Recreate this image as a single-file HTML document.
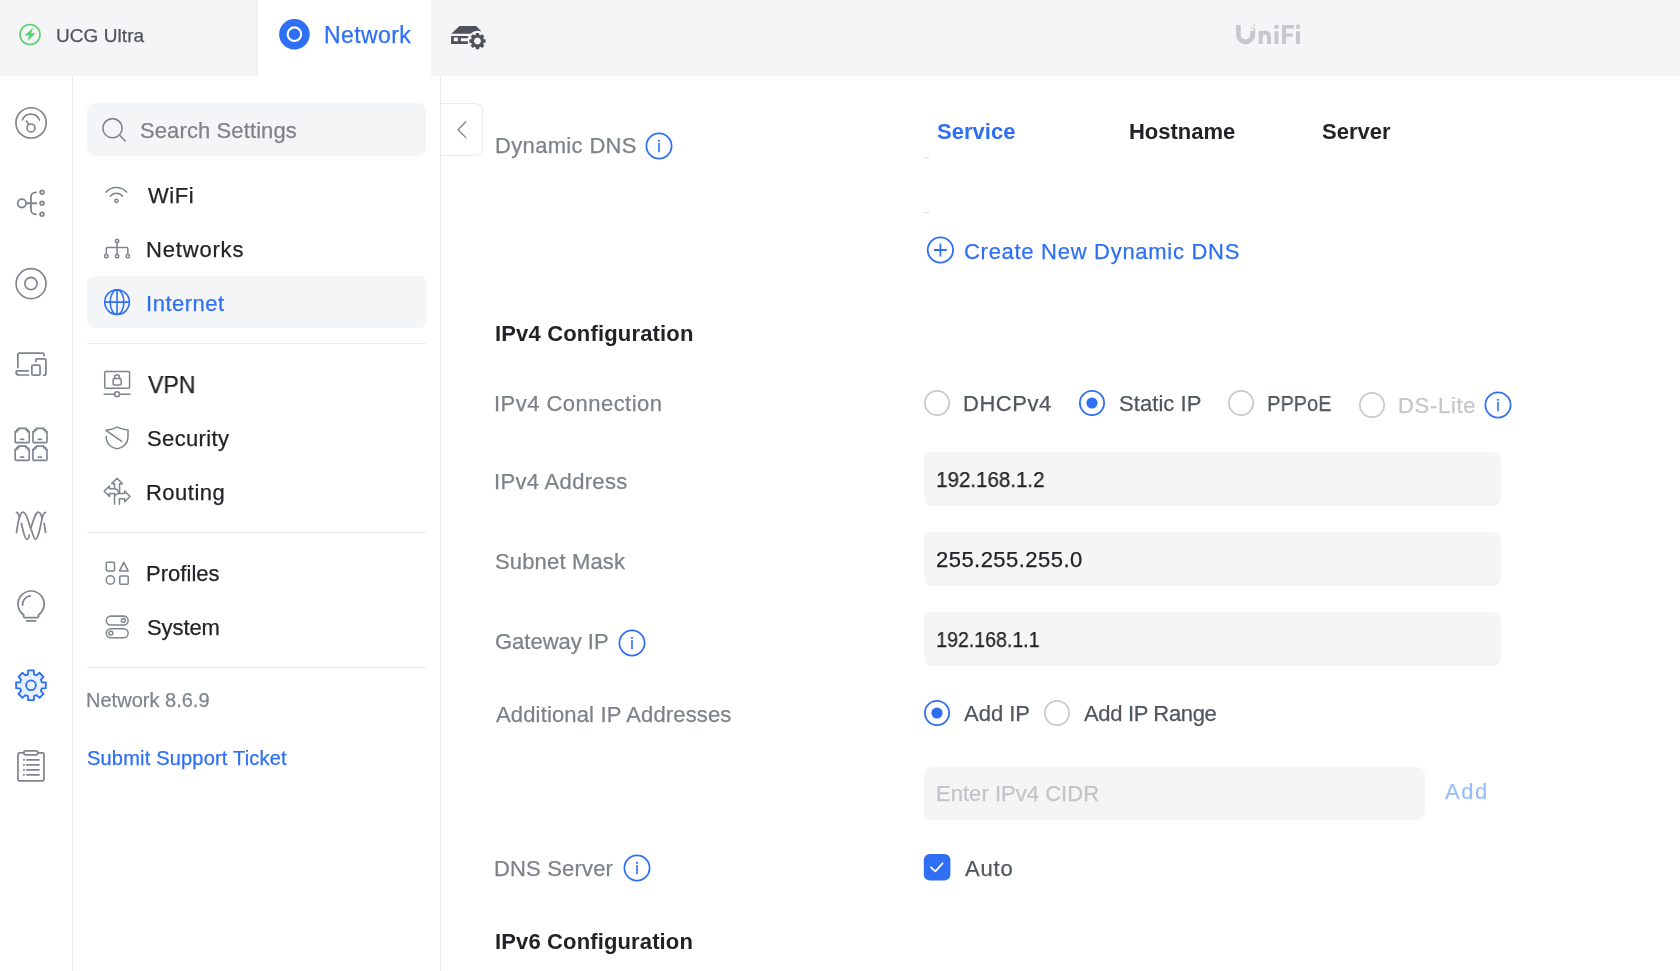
<!DOCTYPE html>
<html><head><meta charset="utf-8"><title>UniFi Network - Internet</title>
<style>
html,body{margin:0;padding:0;}
body{width:1680px;height:971px;overflow:hidden;position:relative;background:#fff;font-family:"Liberation Sans",sans-serif;}
.t{position:absolute;white-space:nowrap;line-height:1;will-change:transform;}
svg{overflow:visible}
</style></head><body>
<div style="position:absolute;left:0;top:0;width:1680px;height:76px;background:#f4f5f6"></div>
<div style="position:absolute;left:256px;top:0;width:2px;height:76px;background:#eef0f2"></div>
<div style="position:absolute;left:258px;top:0;width:173px;height:76px;background:#fff"></div>
<svg style="position:absolute;left:18px;top:23px" width="24" height="24" viewBox="0 0 24 24">
<circle cx="12" cy="11.5" r="10" fill="none" stroke="#5fcf6f" stroke-width="1.6"/>
<path d="M14.4 5.6 L7.2 12.2 H11.4 L10.2 17.3 L17 10.6 H12.8 Z" fill="#5fcf6f" stroke="#5fcf6f" stroke-width="0.6" stroke-linejoin="round"/></svg>
<div class="t" style="left:56.03px;top:26.32px;font-size:19px;color:#50565e;-webkit-text-stroke:0.25px currentColor;letter-spacing:0.070px;">UCG Ultra</div>
<svg style="position:absolute;left:278px;top:18px" width="32" height="32" viewBox="0 0 32 32">
<circle cx="16.4" cy="16.2" r="15.3" fill="#2e6ff4"/><circle cx="16.4" cy="16.2" r="6.8" fill="none" stroke="#fff" stroke-width="2.1"/></svg>
<div class="t" style="left:323.51px;top:23.93px;font-size:23px;color:#2e6ff4;-webkit-text-stroke:0.25px currentColor;letter-spacing:0.416px;">Network</div>
<div style="position:absolute;left:72px;top:76px;width:1px;height:895px;background:#e9eaec"></div>
<div style="position:absolute;left:440px;top:76px;width:1px;height:895px;background:#e9eaec"></div>
<div style="position:absolute;left:87px;top:103px;width:339px;height:53px;border-radius:8px;background:#f4f5f6"></div>
<svg style="position:absolute;left:98px;top:114px" width="32" height="32" viewBox="0 0 32 32">
<circle cx="14.5" cy="14.2" r="9.6" fill="none" stroke="#7e858e" stroke-width="1.6"/><path d="M21.3 21 L27.3 27" stroke="#7e858e" stroke-width="1.6" stroke-linecap="round"/></svg>
<div class="t" style="left:140.25px;top:119.98px;font-size:22px;color:#7e838a;-webkit-text-stroke:0.25px currentColor;letter-spacing:0.107px;">Search Settings</div>
<div style="position:absolute;left:87px;top:276px;width:340px;height:52px;border-radius:8px;background:#f4f5f6"></div>
<div class="t" style="left:148.10px;top:185.28px;font-size:22px;color:#212327;-webkit-text-stroke:0.25px currentColor;letter-spacing:0.532px;">WiFi</div>
<div class="t" style="left:146.40px;top:238.78px;font-size:22px;color:#212327;-webkit-text-stroke:0.25px currentColor;letter-spacing:0.816px;">Networks</div>
<div class="t" style="left:146.17px;top:292.78px;font-size:22px;color:#2e6ff4;-webkit-text-stroke:0.25px currentColor;letter-spacing:0.514px;">Internet</div>
<div class="t" style="left:148.09px;top:372.78px;font-size:24px;color:#212327;-webkit-text-stroke:0.25px currentColor;transform:scaleX(0.9620);transform-origin:0.11px 0;">VPN</div>
<div class="t" style="left:147.20px;top:427.68px;font-size:22px;color:#212327;-webkit-text-stroke:0.25px currentColor;letter-spacing:0.368px;">Security</div>
<div class="t" style="left:146.40px;top:482.18px;font-size:22px;color:#212327;-webkit-text-stroke:0.25px currentColor;letter-spacing:0.482px;">Routing</div>
<div class="t" style="left:146.40px;top:563.48px;font-size:22px;color:#212327;-webkit-text-stroke:0.25px currentColor;letter-spacing:0.034px;">Profiles</div>
<div class="t" style="left:147.20px;top:617.48px;font-size:22px;color:#212327;-webkit-text-stroke:0.25px currentColor;letter-spacing:-0.099px;">System</div>
<div style="position:absolute;left:87px;top:343px;width:339px;height:1px;background:#e9eaec"></div>
<div style="position:absolute;left:87px;top:532px;width:339px;height:1px;background:#e9eaec"></div>
<div style="position:absolute;left:87px;top:667px;width:339px;height:1px;background:#e9eaec"></div>
<div class="t" style="left:85.86px;top:689.57px;font-size:20px;color:#80868e;-webkit-text-stroke:0.25px currentColor;letter-spacing:0.015px;">Network 8.6.9</div>
<div class="t" style="left:86.59px;top:748.47px;font-size:20px;color:#2e6ff4;-webkit-text-stroke:0.25px currentColor;letter-spacing:0.198px;">Submit Support Ticket</div>
<div style="position:absolute;left:441px;top:103px;width:41px;height:51px;border:1px solid #e9eaec;border-left:none;border-radius:0 8px 8px 0;background:#fff"></div>
<svg style="position:absolute;left:452px;top:118px" width="20" height="24" viewBox="0 0 20 24">
<path d="M13.9 3.8 L6 11.7 L13.9 19.6" fill="none" stroke="#7e858e" stroke-width="1.3" stroke-linecap="round" stroke-linejoin="round"/></svg>
<div class="t" style="left:494.70px;top:134.98px;font-size:22px;color:#7d828a;-webkit-text-stroke:0.25px currentColor;letter-spacing:0.337px;">Dynamic DNS</div>
<svg style="position:absolute;left:644.4px;top:131.4px" width="30" height="30" viewBox="0 0 30 30">
<circle cx="15" cy="15" r="12.6" fill="none" stroke="#2e6ff4" stroke-width="1.75"/><circle cx="15" cy="9.8" r="1.1" fill="#2e6ff4"/><path d="M15 12 V21.2" stroke="#2e6ff4" stroke-width="1.6"/></svg>
<div class="t" style="left:937.17px;top:121.18px;font-size:22px;color:#2e6ff4;font-weight:700;letter-spacing:0.017px;">Service</div>
<div class="t" style="left:1129.13px;top:121.18px;font-size:22px;color:#212327;font-weight:700;letter-spacing:-0.019px;">Hostname</div>
<div class="t" style="left:1321.97px;top:121.18px;font-size:22px;color:#212327;font-weight:700;">Server</div>
<div style="position:absolute;left:924px;top:157px;width:6px;height:1px;background:#e3e4e6"></div>
<div style="position:absolute;left:924px;top:212px;width:6px;height:1px;background:#e3e4e6"></div>
<svg style="position:absolute;left:925px;top:235px" width="30" height="30" viewBox="0 0 30 30">
<circle cx="15.4" cy="15" r="12.7" fill="none" stroke="#2e6ff4" stroke-width="1.8"/><path d="M15.4 8.6 V21.4 M9 15 H21.8" stroke="#2e6ff4" stroke-width="1.8"/></svg>
<div class="t" style="left:963.68px;top:240.58px;font-size:22px;color:#2e6ff4;-webkit-text-stroke:0.25px currentColor;letter-spacing:0.711px;">Create New Dynamic DNS</div>
<div class="t" style="left:494.53px;top:322.78px;font-size:22px;color:#212327;font-weight:700;letter-spacing:0.164px;">IPv4 Configuration</div>
<div class="t" style="left:493.97px;top:392.68px;font-size:22px;color:#7d828a;-webkit-text-stroke:0.25px currentColor;letter-spacing:0.467px;">IPv4 Connection</div>
<svg style="position:absolute;left:924px;top:389.5px" width="26" height="26" viewBox="0 0 26 26"><circle cx="13" cy="13" r="12.15" fill="none" stroke="#c6c9cd" stroke-width="1.7"/></svg>
<div class="t" style="left:963.20px;top:393.13px;font-size:22px;color:#50565e;-webkit-text-stroke:0.25px currentColor;letter-spacing:0.514px;">DHCPv4</div>
<svg style="position:absolute;left:1078.5px;top:389.5px" width="26" height="26" viewBox="0 0 26 26"><circle cx="13" cy="13" r="12.1" fill="none" stroke="#2e6ff4" stroke-width="1.8"/><circle cx="13" cy="13" r="5.6" fill="#2e6ff4"/></svg>
<div class="t" style="left:1118.50px;top:393.13px;font-size:22px;color:#50565e;-webkit-text-stroke:0.25px currentColor;letter-spacing:0.069px;">Static IP</div>
<svg style="position:absolute;left:1227.5px;top:389.5px" width="26" height="26" viewBox="0 0 26 26"><circle cx="13" cy="13" r="12.15" fill="none" stroke="#c6c9cd" stroke-width="1.7"/></svg>
<div class="t" style="left:1266.70px;top:393.13px;font-size:22px;color:#50565e;-webkit-text-stroke:0.25px currentColor;transform:scaleX(0.9065);transform-origin:1.80px 0;">PPPoE</div>
<svg style="position:absolute;left:1359px;top:392.0px" width="26" height="26" viewBox="0 0 26 26"><circle cx="13" cy="13" r="12.15" fill="none" stroke="#c6c9cd" stroke-width="1.7"/></svg>
<div class="t" style="left:1397.70px;top:395.48px;font-size:22px;color:#c3c6ca;-webkit-text-stroke:0.25px currentColor;letter-spacing:0.704px;">DS-Lite</div>
<svg style="position:absolute;left:1483.3px;top:389.9px" width="30" height="30" viewBox="0 0 30 30">
<circle cx="15" cy="15" r="12.6" fill="none" stroke="#2e6ff4" stroke-width="1.75"/><circle cx="15" cy="9.8" r="1.1" fill="#2e6ff4"/><path d="M15 12 V21.2" stroke="#2e6ff4" stroke-width="1.6"/></svg>
<div class="t" style="left:493.97px;top:470.78px;font-size:22px;color:#7d828a;-webkit-text-stroke:0.25px currentColor;letter-spacing:0.329px;">IPv4 Address</div>
<div style="position:absolute;left:924px;top:452px;width:577px;height:54px;border-radius:8px;background:#f5f5f5"></div>
<div class="t" style="left:935.82px;top:469.08px;font-size:22px;color:#212327;-webkit-text-stroke:0.25px currentColor;transform:scaleX(0.9328);transform-origin:1.68px 0;">192.168.1.2</div>
<div style="position:absolute;left:924px;top:532px;width:577px;height:54px;border-radius:8px;background:#f5f5f5"></div>
<div class="t" style="left:936.39px;top:549.08px;font-size:22px;color:#212327;-webkit-text-stroke:0.25px currentColor;letter-spacing:0.458px;">255.255.255.0</div>
<div style="position:absolute;left:924px;top:612px;width:577px;height:54px;border-radius:8px;background:#f5f5f5"></div>
<div class="t" style="left:935.82px;top:629.08px;font-size:22px;color:#212327;-webkit-text-stroke:0.25px currentColor;transform:scaleX(0.8894);transform-origin:1.68px 0;">192.168.1.1</div>
<div class="t" style="left:494.70px;top:551.13px;font-size:22px;color:#7d828a;-webkit-text-stroke:0.25px currentColor;letter-spacing:0.158px;">Subnet Mask</div>
<div class="t" style="left:494.59px;top:631.48px;font-size:22px;color:#7d828a;-webkit-text-stroke:0.25px currentColor;letter-spacing:-0.015px;">Gateway IP</div>
<svg style="position:absolute;left:616.6px;top:627.6px" width="30" height="30" viewBox="0 0 30 30">
<circle cx="15" cy="15" r="12.6" fill="none" stroke="#2e6ff4" stroke-width="1.75"/><circle cx="15" cy="9.8" r="1.1" fill="#2e6ff4"/><path d="M15 12 V21.2" stroke="#2e6ff4" stroke-width="1.6"/></svg>
<div class="t" style="left:495.66px;top:703.58px;font-size:22px;color:#7d828a;-webkit-text-stroke:0.25px currentColor;letter-spacing:0.154px;">Additional IP Addresses</div>
<svg style="position:absolute;left:924px;top:700.0px" width="26" height="26" viewBox="0 0 26 26"><circle cx="13" cy="13" r="12.1" fill="none" stroke="#2e6ff4" stroke-width="1.8"/><circle cx="13" cy="13" r="5.6" fill="#2e6ff4"/></svg>
<div class="t" style="left:964.46px;top:703.28px;font-size:22px;color:#50565e;-webkit-text-stroke:0.25px currentColor;">Add IP</div>
<svg style="position:absolute;left:1043.6px;top:700.0px" width="26" height="26" viewBox="0 0 26 26"><circle cx="13" cy="13" r="12.15" fill="none" stroke="#c6c9cd" stroke-width="1.7"/></svg>
<div class="t" style="left:1084.46px;top:703.28px;font-size:22px;color:#50565e;-webkit-text-stroke:0.25px currentColor;letter-spacing:-0.342px;">Add IP Range</div>
<div style="position:absolute;left:924px;top:767px;width:501px;height:53px;border-radius:8px;background:#f5f5f5"></div>
<div class="t" style="left:936.40px;top:783.28px;font-size:22px;color:#c1c4c9;-webkit-text-stroke:0.25px currentColor;letter-spacing:0.031px;">Enter IPv4 CIDR</div>
<div class="t" style="left:1445.26px;top:780.58px;font-size:22px;color:#97bdf9;-webkit-text-stroke:0.25px currentColor;letter-spacing:1.560px;">Add</div>
<div class="t" style="left:494.20px;top:857.58px;font-size:22px;color:#7d828a;-webkit-text-stroke:0.25px currentColor;letter-spacing:0.168px;">DNS Server</div>
<svg style="position:absolute;left:621.7px;top:853.3px" width="30" height="30" viewBox="0 0 30 30">
<circle cx="15" cy="15" r="12.6" fill="none" stroke="#2e6ff4" stroke-width="1.75"/><circle cx="15" cy="9.8" r="1.1" fill="#2e6ff4"/><path d="M15 12 V21.2" stroke="#2e6ff4" stroke-width="1.6"/></svg>
<svg style="position:absolute;left:924px;top:854px" width="26" height="26" viewBox="0 0 26 26">
<rect x="-0.2" y="-0.1" width="26.6" height="26.6" rx="6" fill="#2e6ff4"/><path d="M7 13.3 L11.3 17.3 L18.6 9.3" fill="none" stroke="#fff" stroke-width="1.8" stroke-linecap="round" stroke-linejoin="round"/></svg>
<div class="t" style="left:964.96px;top:857.58px;font-size:22px;color:#50565e;-webkit-text-stroke:0.25px currentColor;letter-spacing:0.806px;">Auto</div>
<div class="t" style="left:494.53px;top:931.18px;font-size:22px;color:#212327;font-weight:700;letter-spacing:0.135px;">IPv6 Configuration</div>
<svg style="position:absolute;left:445px;top:18px" width="50" height="38" viewBox="0 0 1278 971" >
<path d="M160 405 L370 205 L795 205 L935 345 A 270 270 0 0 0 650 405 Z" fill="#4e535b"/>
<path d="M155 460 H605 L585 500 V515 H405 V595 H585 V665 H155 Z M225 500 V595 H330 V500 Z" fill="#4e535b" fill-rule="evenodd"/>
<path d="M785.2 428.1 L790.0 381.8 L870.0 381.8 L874.8 428.1 L912.8 443.8 L948.9 414.5 L1005.5 471.1 L976.2 507.2 L991.9 545.2 L1038.2 550.0 L1038.2 630.0 L991.9 634.8 L976.2 672.8 L1005.5 708.9 L948.9 765.5 L912.8 736.2 L874.8 751.9 L870.0 798.2 L790.0 798.2 L785.2 751.9 L747.2 736.2 L711.1 765.5 L654.5 708.9 L683.8 672.8 L668.1 634.8 L621.8 630.0 L621.8 550.0 L668.1 545.2 L683.8 507.2 L654.5 471.1 L711.1 414.5 L747.2 443.8 Z M830 500 A 88 88 0 1 0 830.1 500 Z" fill="#4e535b" fill-rule="evenodd"/>
</svg>
<svg style="position:absolute;left:1225px;top:15px" width="90" height="40" viewBox="0 0 1680 747" >
<path d="M250 185 V367 A 132 132 0 0 0 518 367 V300" fill="none" stroke="#c5c8cd" stroke-width="88"/>
<rect x="532" y="178" width="26" height="26" fill="#c5c8cd" transform="rotate(45 545 191)"/>
<rect x="486" y="220" width="30" height="30" fill="#c5c8cd" transform="rotate(45 501 235)"/>
<rect x="525" y="250" width="40" height="40" fill="#c5c8cd" transform="rotate(45 545 270)"/>
<path d="M667 540 V300 M667 420 Q 667 327 745 327 Q 822 327 822 420 V540" fill="none" stroke="#c5c8cd" stroke-width="76"/>
<rect x="922" y="305" width="78" height="235" fill="#c5c8cd"/><circle cx="961" cy="220" r="42" fill="#c5c8cd"/>
<path d="M1065 185 H1285 V250 H1140 V345 H1265 V405 H1140 V540 H1065 Z" fill="#c5c8cd"/>
<rect x="1325" y="305" width="76" height="235" fill="#c5c8cd"/><circle cx="1363" cy="220" r="42" fill="#c5c8cd"/>
</svg>
<svg style="position:absolute;left:10px;top:102px" width="42" height="42" viewBox="0 0 971 971" ><g fill="none" stroke="#7e858e" stroke-linecap="round" stroke-linejoin="round" stroke-width="38">
<circle cx="487" cy="483" r="350"/><path d="M285 415 A 212 212 0 0 1 680 415"/>
<circle cx="486" cy="600" r="92"/><path d="M385 440 L420 510"/></g></svg>
<svg style="position:absolute;left:10px;top:182px" width="42" height="42" viewBox="0 0 971 971" ><g fill="none" stroke="#7e858e" stroke-linecap="round" stroke-linejoin="round" stroke-width="42">
<circle cx="275" cy="492" r="97"/><path d="M372 492 H610"/>
<path d="M600 240 H590 A 105 105 0 0 0 485 345 V640 A 105 105 0 0 0 590 745 H600"/>
<circle cx="740" cy="238" r="43"/><circle cx="740" cy="492" r="43"/><circle cx="740" cy="745" r="43"/></g></svg>
<svg style="position:absolute;left:10px;top:262px" width="42" height="42" viewBox="0 0 971 971" ><g fill="none" stroke="#7e858e" stroke-linecap="round" stroke-linejoin="round" stroke-width="38">
<circle cx="487" cy="500" r="346"/><circle cx="485" cy="497" r="141"/></g></svg>
<svg style="position:absolute;left:10px;top:343px" width="42" height="42" viewBox="0 0 971 971" ><g fill="none" stroke="#7e858e" stroke-linecap="round" stroke-linejoin="round" stroke-width="40">
<path d="M182 565 V262 Q182 232 212 232 H755 Q785 232 785 262 V290"/>
<path d="M425 645 H165 Q140 645 140 670 Q140 740 215 740 H425"/>
<path d="M598 425 V395 Q598 365 628 365 H800 Q830 365 830 395 V715 Q830 745 800 745 H780"/>
<rect x="505" y="510" width="190" height="235" rx="32"/></g></svg>
<svg style="position:absolute;left:10px;top:423px" width="42" height="42" viewBox="0 0 971 971" ><g fill="none" stroke="#7e858e" stroke-width="38" stroke-linejoin="miter"><path d="M120 430 V200 H160 V160 H200 V125 H370 V160 H410 V200 H445 V430 Q445 455 420 455 H145 Q120 455 120 430 Z"/><path d="M228 378 H330"/><path d="M530 430 V200 H570 V160 H610 V125 H780 V160 H820 V200 H855 V430 Q855 455 830 455 H555 Q530 455 530 430 Z"/><path d="M638 378 H740"/><path d="M120 840 V610 H160 V570 H200 V535 H370 V570 H410 V610 H445 V840 Q445 865 420 865 H145 Q120 865 120 840 Z"/><path d="M228 788 H330"/><path d="M530 840 V610 H570 V570 H610 V535 H780 V570 H820 V610 H855 V840 Q855 865 830 865 H555 Q530 865 530 840 Z"/><path d="M638 788 H740"/></g></svg>
<svg style="position:absolute;left:10px;top:503px" width="42" height="42" viewBox="0 0 971 971" ><g fill="none" stroke="#7e858e" stroke-linecap="round" stroke-linejoin="round" stroke-width="40">
<path d="M150 680 C190 400 230 210 305 210 C390 210 430 480 490 620 C540 760 560 840 585 840 C650 840 700 560 740 360 C760 280 790 215 820 215"/>
<path d="M150 215 C180 215 200 260 215 320"/>
<path d="M262 470 C300 620 340 840 385 840 C420 840 440 790 445 740"/>
<path d="M490 560 C540 400 590 210 655 210 C700 210 725 290 740 340"/>
<path d="M790 470 C805 560 815 620 820 680"/></g></svg>
<svg style="position:absolute;left:10px;top:584px" width="42" height="42" viewBox="0 0 971 971" ><g fill="none" stroke="#7e858e" stroke-linecap="round" stroke-linejoin="round" stroke-width="40">
<path d="M315 712 A 302 302 0 1 1 659 712 V750 Q659 780 629 780 H345 Q315 780 315 750 Z"/>
<path d="M290 490 A 200 200 0 0 1 470 275"/><path d="M385 855 H590"/></g></svg>
<svg style="position:absolute;left:10px;top:664px" width="42" height="42" viewBox="0 0 971 971" ><path d="M415.1 239.5 L418.9 148.3 L551.1 148.3 L554.9 239.5 L614.1 264.0 L681.3 202.2 L774.8 295.7 L713.0 362.9 L737.5 422.1 L828.7 425.9 L828.7 558.1 L737.5 561.9 L713.0 621.1 L774.8 688.3 L681.3 781.8 L614.1 720.0 L554.9 744.5 L551.1 835.7 L418.9 835.7 L415.1 744.5 L355.9 720.0 L288.7 781.8 L195.2 688.3 L257.0 621.1 L232.5 561.9 L141.3 558.1 L141.3 425.9 L232.5 422.1 L257.0 362.9 L195.2 295.7 L288.7 202.2 L355.9 264.0 Z" fill="#e6effd" stroke="#2e6ff4" stroke-width="42" stroke-linejoin="round"/>
<circle cx="485" cy="492" r="113" fill="none" stroke="#2e6ff4" stroke-width="42"/></svg>
<svg style="position:absolute;left:10px;top:744px" width="42" height="42" viewBox="0 0 971 971" ><g fill="none" stroke="#7e858e" stroke-linecap="round" stroke-linejoin="round" stroke-width="40">
<path d="M310 205 H220 Q185 205 185 240 V820 Q185 855 220 855 H750 Q785 855 785 820 V240 Q785 205 750 205 H660"/>
<rect x="320" y="160" width="325" height="90" rx="45"/>
<path d="M322 365 H323 M395 365 H665 M322 480 H323 M395 480 H665 M322 598 H323 M395 598 H665 M322 715 H323 M395 715 H665" stroke-linecap="square"/></g></svg>
<svg style="position:absolute;left:100px;top:180px" width="34" height="34" viewBox="0 0 971 971" ><g fill="none" stroke="#7e858e" stroke-linecap="round" stroke-linejoin="round" stroke-width="43">
<path d="M175 345 A 394 394 0 0 1 760 345"/><path d="M295 465 A 219 219 0 0 1 645 465"/>
<circle cx="470" cy="595" r="46"/></g></svg>
<svg style="position:absolute;left:100px;top:232px" width="34" height="34" viewBox="0 0 971 971" ><g fill="none" stroke="#7e858e" stroke-linecap="round" stroke-linejoin="round" stroke-width="43">
<rect x="442" y="213" width="90" height="90" rx="28"/><path d="M487 303 V645"/>
<path d="M180 645 V475 Q180 445 210 445 H765 Q795 445 795 475 V645"/>
<rect x="135" y="645" width="90" height="90" rx="28"/><rect x="442" y="645" width="90" height="90" rx="28"/><rect x="750" y="645" width="90" height="90" rx="28"/></g></svg>
<svg style="position:absolute;left:100px;top:286px" width="34" height="34" viewBox="0 0 971 971" ><g fill="none" stroke="#2e6ff4" stroke-width="45">
<circle cx="487" cy="460" r="352"/><ellipse cx="487" cy="460" rx="195" ry="352"/>
<path d="M135 460 H840 M487 108 V812"/></g></svg>
<svg style="position:absolute;left:100px;top:367px" width="34" height="34" viewBox="0 0 971 971" ><g fill="none" stroke="#7e858e" stroke-linecap="round" stroke-linejoin="round" stroke-width="43">
<rect x="135" y="130" width="710" height="475" rx="30"/>
<rect x="375" y="330" width="230" height="185" rx="30"/><path d="M420 330 V290 A 67 67 0 0 1 555 290 V330"/>
<path d="M120 775 H415 M560 775 H860"/><circle cx="487" cy="775" r="70"/></g></svg>
<svg style="position:absolute;left:100px;top:421px" width="34" height="34" viewBox="0 0 971 971" ><g fill="none" stroke="#7e858e" stroke-linecap="round" stroke-linejoin="round" stroke-width="43">
<path d="M175 440 C175 640 320 770 487 790 C660 770 800 640 800 460 V255 C680 245 570 220 487 175 C400 220 290 250 170 265 L620 585"/></g></svg>
<svg style="position:absolute;left:100px;top:474px" width="34" height="34" viewBox="0 0 971 971" ><g fill="none" stroke="#7e858e" stroke-linecap="round" stroke-linejoin="round" stroke-width="43">
<path d="M415 415 V280 H330 L487 125 L645 280 H560 V540"/>
<path d="M540 530 C500 440 460 420 415 420 H270 V340 L120 495 L270 640 V560 H415 V865"/>
<path d="M415 650 C430 600 480 560 560 560 H705 V485 L855 640 L705 790 V705 H555 V865"/></g></svg>
<svg style="position:absolute;left:100px;top:556px" width="34" height="34" viewBox="0 0 971 971" ><g fill="none" stroke="#7e858e" stroke-linecap="round" stroke-linejoin="round" stroke-width="43">
<rect x="180" y="180" width="235" height="245" rx="30"/><path d="M677 180 L805 425 H560 Z"/>
<circle cx="297" cy="685" r="120"/><rect x="565" y="570" width="240" height="235" rx="30"/></g></svg>
<svg style="position:absolute;left:100px;top:610px" width="34" height="34" viewBox="0 0 971 971" ><g fill="none" stroke="#7e858e" stroke-linecap="round" stroke-linejoin="round" stroke-width="43">
<rect x="180" y="175" width="625" height="255" rx="127"/><circle cx="667" cy="300" r="55"/>
<rect x="180" y="535" width="625" height="260" rx="130"/><circle cx="310" cy="660" r="55"/></g></svg>
</body></html>
